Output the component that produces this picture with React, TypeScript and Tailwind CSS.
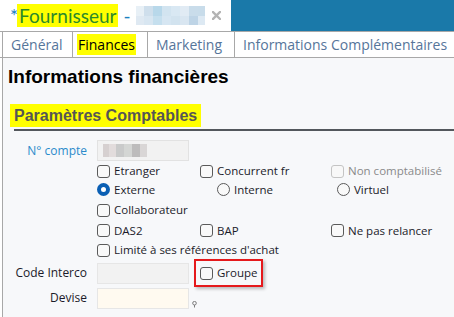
import React from "react";

const Checkbox = ({ disabled = false }: { disabled?: boolean }) => (
  <span
    className={`inline-block w-[13px] h-[13px] rounded-[3px] border shrink-0 ${
      disabled ? "border-[#c4c4c4] bg-[#f8f8f8]" : "border-[#5a5a5a] bg-[#f9f9f9]"
    }`}
  />
);

const Radio = ({ checked = false }: { checked?: boolean }) =>
  checked ? (
    <span className="inline-flex items-center justify-center w-[13px] h-[13px] rounded-full bg-[#0a5fb4] shrink-0">
      <span className="w-[5px] h-[5px] rounded-full bg-white" />
    </span>
  ) : (
    <span className="inline-block w-[13px] h-[13px] rounded-full border border-[#5a5a5a] bg-[#f9f9f9] shrink-0" />
  );

const CB = ({ label, w, disabled = false }: { label?: string; w?: string; disabled?: boolean }) => (
  <div className={`flex items-center gap-[4px] ${w ?? ""}`}>
    <Checkbox disabled={disabled} />
    {label && (
      <span className={disabled ? "text-[#8a8a8a]" : "text-[#1b1b2a]"}>{label}</span>
    )}
  </div>
);

const RD = ({ label, w, checked = false }: { label: string; w?: string; checked?: boolean }) => (
  <div className={`flex items-center gap-[4px] ${w ?? ""}`}>
    <Radio checked={checked} />
    <span className="text-[#1b1b2a]">{label}</span>
  </div>
);

export default function App() {
  return (
    <div className="w-[454px] h-[317px] overflow-hidden bg-white flex flex-col" style={{ fontFamily: '"Open Sans", "Noto Sans", sans-serif' }}>
      {/* Title bar */}
      <div className="h-[31px] flex shrink-0">
        <div className="w-[231px] flex items-center pl-[10px] bg-white" style={{ fontFamily: 'Lato, "Open Sans", sans-serif' }}>
          <span className="text-[19px] leading-none text-[#1a7fc1]">*</span>
          <span className="bg-[#ffff00] text-[#2b8a2b] text-[19px] leading-[23px] px-[2px] -ml-[1px]">Fournisseur</span>
          <span className="text-[19px] leading-none text-[#1a7fc1] ml-[5px]">-</span>
          <div className="ml-[5px] flex h-[19px] w-[69px]">
            <div className="flex flex-col w-[8px]"><div className="flex-1 bg-[#e8f0f6]" /><div className="flex-1 bg-[#dfe9f2]" /></div>
            <div className="flex flex-col w-[9px]"><div className="flex-1 bg-[#cfdfec]" /><div className="flex-1 bg-[#d8e6f1]" /></div>
            <div className="flex flex-col w-[9px]"><div className="flex-1 bg-[#b8d8ea]" /><div className="flex-1 bg-[#c5dfee]" /></div>
            <div className="flex flex-col w-[9px]"><div className="flex-1 bg-[#d2e4f0]" /><div className="flex-1 bg-[#d6e6f2]" /></div>
            <div className="flex flex-col w-[9px]"><div className="flex-1 bg-[#d9e8f3]" /><div className="flex-1 bg-[#d2e3ef]" /></div>
            <div className="flex flex-col w-[9px]"><div className="flex-1 bg-[#e1ebf4]" /><div className="flex-1 bg-[#d9e6f1]" /></div>
            <div className="flex flex-col w-[9px]"><div className="flex-1 bg-[#c9dcea]" /><div className="flex-1 bg-[#bed4e6]" /></div>
            <div className="flex flex-col w-[7px]"><div className="flex-1 bg-[#c8dcea]" /><div className="flex-1 bg-[#dde9f3]" /></div>
          </div>
          <svg className="ml-[7px]" width="9" height="9" viewBox="0 0 9 9">
            <path d="M1 1 L8 8 M8 1 L1 8" stroke="#b4b4b4" strokeWidth="2.4" strokeLinecap="square" />
          </svg>
        </div>
        <div className="flex-1 bg-[#1a79a9]" />
      </div>

      {/* Tabs */}
      <div className="h-[27px] flex items-stretch border-t border-b border-[#a8a8a8] pl-[2px] shrink-0 text-[14px] bg-white">
        <div className="w-[71px] flex items-center pl-[8px] border-l border-r border-[#a8a8a8] text-[#56759a]">Général</div>
        <div className="w-[75px] flex items-center pl-[4px] border-r border-[#a8a8a8]">
          <span className="bg-[#ffff00] text-black px-[1px] leading-[21px]">Finances</span>
        </div>
        <div className="w-[87px] flex items-center pl-[8px] border-r border-[#a8a8a8] text-[#56759a]">Marketing</div>
        <div className="flex-1 flex items-center pl-[8px] text-[#56759a] whitespace-nowrap">Informations Complémentaires</div>
      </div>

      {/* Content */}
      <div className="flex-1 ml-[2px] border-l border-[#a8a8a8] bg-[#f7f8fa] flex flex-col text-[11.5px]">
        <div className="pl-[5px] pt-[8px] h-[30px] text-[19px] font-bold leading-[22px] text-black" style={{ fontFamily: '"Liberation Sans", Arial, sans-serif' }}>
          Informations financières
        </div>
        <div className="mt-[16px] ml-[7px] flex">
          <span className="bg-[#ffff00] text-[#555555] text-[16px] font-bold leading-[23px] px-[4px]" style={{ fontFamily: '"Liberation Sans", Arial, sans-serif' }}>
            Paramètres Comptables
          </span>
        </div>
        <div className="ml-[11px] mt-[2px] h-[2px] bg-[#53575c]" />

        {/* N° compte */}
        <div className="mt-[9px] h-[21px] flex items-center">
          <div className="w-[84px] text-right text-[#2b8bcb] text-[12px]">N° compte</div>
          <div className="ml-[10px] w-[92px] h-[21px] border border-[#e2e2e2] bg-[#f2f2f2] flex items-center pl-[5px]">
            <div className="flex h-[13px]">
              <div className="w-[6px] bg-[#d6d0d0]" />
              <div className="w-[7px] bg-[#e2dcdc]" />
              <div className="w-[8px] bg-[#c9caca]" />
              <div className="w-[8px] bg-[#d4d6d4]" />
              <div className="w-[8px] bg-[#bdbcbc]" />
              <div className="w-[7px] bg-[#d9d6d6]" />
            </div>
          </div>
        </div>

        {/* Row 1 */}
        <div className="h-[20px] flex items-center pl-[94px]">
          <CB label="Etranger" w="w-[103px]" />
          <CB label="Concurrent fr" w="w-[131px]" />
          <CB label="Non comptabilisé" disabled />
        </div>
        {/* Row 2 radios */}
        <div className="h-[17px] flex items-center pl-[94px]">
          <RD label="Externe" checked w="w-[120px]" />
          <RD label="Interne" w="w-[120px]" />
          <RD label="Virtuel" />
        </div>
        {/* Row 3 */}
        <div className="mt-[2px] h-[20px] flex items-center pl-[94px]">
          <CB label="Collaborateur" />
        </div>
        {/* Row 4 */}
        <div className="h-[21px] flex items-center pl-[94px]">
          <CB label="DAS2" w="w-[103px]" />
          <CB label="BAP" w="w-[131px]" />
          <CB label="Ne pas relancer" />
        </div>
        {/* Row 5 */}
        <div className="h-[18px] flex items-center pl-[94px]">
          <CB label="Limité à ses références d'achat" />
        </div>
        {/* Code Interco */}
        <div className="h-[28px] flex items-center">
          <div className="w-[84px] text-right text-[#1b1b2a] text-[12px]">Code Interco</div>
          <div className="ml-[10px] w-[92px] h-[21px] border border-[#e6e6e6] bg-[#f2f2f2]" />
          <div className="ml-[5px] h-[28px] w-[69px] border-2 border-[#e5191c] shadow-[2px_2px_3px_rgba(0,0,0,0.25)] flex items-center pl-[4px]">
            <CB label="Groupe" />
          </div>
        </div>
        {/* Devise */}
        <div className="h-[22px] flex items-center">
          <div className="w-[84px] text-right text-[#1b1b2a] text-[12px]">Devise</div>
          <div className="ml-[10px] w-[92px] h-[21px] border border-[#e6e6e6] bg-[#fffaf0]" />
          <svg className="ml-[3px] mt-[12px]" width="5" height="7" viewBox="0 0 5 7">
            <circle cx="2.5" cy="2.2" r="1.8" fill="none" stroke="#7a7a7a" strokeWidth="1" />
            <path d="M2.5 4 L2.5 6.5" stroke="#7a7a7a" strokeWidth="1" />
          </svg>
        </div>
      </div>
    </div>
  );
}
